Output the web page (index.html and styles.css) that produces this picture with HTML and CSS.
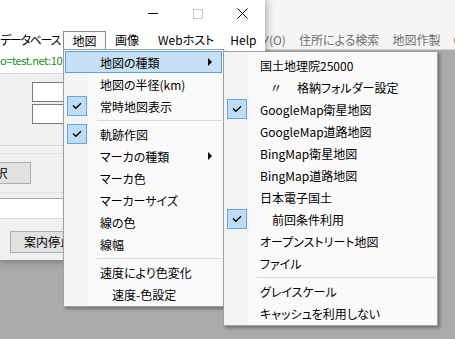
FILE: index.html
```html
<!DOCTYPE html>
<html lang="ja">
<head>
    <meta charset="UTF-8">
    <meta name="viewport" content="width=device-width, initial-scale=1.0">
    <title>地図メニュー</title>
    <link rel="stylesheet" href="styles.css">
</head>
<body>
    <!-- parent window behind -->
    <div class="backwin">
        <div class="back-title"></div>
        <div class="back-menubar">
            <span class="back-first">ソ(O)</span>
            <span>住所による検索</span>
            <span>地図作製</span>
            <span>Option</span>
        </div>
    </div>

    <!-- front window -->
    <div class="win">
        <div class="titlebar">
            <span class="cap"><span class="cap-min"></span></span>
            <span class="cap"><span class="cap-max"></span></span>
            <span class="cap">
                <svg width="11" height="11" viewBox="0 0 11 11"><path d="M0.5 0.5L10.5 10.5M10.5 0.5L0.5 10.5" stroke="#000" stroke-width="1" fill="none"/></svg>
            </span>
        </div>
        <div class="menubar">
            <span class="mb-first">データベース</span>
            <span class="mb-item mb-open">地図</span>
            <span class="mb-item mb-img">画像</span>
            <span class="mb-item mb-web">Webホスト</span>
            <span class="mb-item mb-help">Help</span>
        </div>
        <div class="infobar">o=test.net:10</div>
        <div class="content">
            <div class="field"></div>
            <div class="field field-2"></div>
            <div class="rule rule-a"></div>
            <div class="rule rule-b"></div>
            <div class="btn btn-sel">選択</div>
            <div class="rule rule-c"></div>
            <div class="textbox"></div>
            <div class="btn btn-stop">案内停止</div>
        </div>
    </div>

    <!-- 地図 dropdown -->
    <div class="menu menu-main">
        <div class="mi hot"><span></span><span>地図の種類</span><span class="arrow"></span></div>
        <div class="mi"><span></span><span>地図の半径(km)</span></div>
        <div class="mi"><span class="chk"><svg width="10" height="8" viewBox="0 0 10 8"><polyline points="1,3.5 3.8,6.3 9,1.2" fill="none" stroke="#000" stroke-width="1.3"/></svg></span><span>常時地図表示</span></div>
        <div class="sep"></div>
        <div class="mi"><span class="chk"><svg width="10" height="8" viewBox="0 0 10 8"><polyline points="1,3.5 3.8,6.3 9,1.2" fill="none" stroke="#000" stroke-width="1.3"/></svg></span><span>軌跡作図</span></div>
        <div class="mi"><span></span><span>マーカの種類</span><span class="arrow"></span></div>
        <div class="mi"><span></span><span>マーカ色</span></div>
        <div class="mi"><span></span><span>マーカーサイズ</span></div>
        <div class="mi"><span></span><span>線の色</span></div>
        <div class="mi"><span></span><span>線幅</span></div>
        <div class="sep"></div>
        <div class="mi"><span></span><span>速度により色変化</span></div>
        <div class="mi"><span></span><span class="ind">速度-色設定</span></div>
    </div>

    <!-- 地図の種類 submenu -->
    <div class="menu menu-sub">
        <div class="mi"><span></span><span>国土地理院25000</span></div>
        <div class="mi"><span></span><span><span class="ditto">〃</span>格納フォルダー設定</span></div>
        <div class="mi"><span class="chk"><svg width="10" height="8" viewBox="0 0 10 8"><polyline points="1,3.5 3.8,6.3 9,1.2" fill="none" stroke="#000" stroke-width="1.3"/></svg></span><span>GoogleMap衛星地図</span></div>
        <div class="mi"><span></span><span>GoogleMap道路地図</span></div>
        <div class="mi"><span></span><span>BingMap衛星地図</span></div>
        <div class="mi"><span></span><span>BingMap道路地図</span></div>
        <div class="mi"><span></span><span>日本電子国土</span></div>
        <div class="mi"><span class="chk"><svg width="10" height="8" viewBox="0 0 10 8"><polyline points="1,3.5 3.8,6.3 9,1.2" fill="none" stroke="#000" stroke-width="1.3"/></svg></span><span class="ind">前回条件利用</span></div>
        <div class="mi"><span></span><span>オープンストリート地図</span></div>
        <div class="mi"><span></span><span>ファイル</span></div>
        <div class="sep"></div>
        <div class="mi"><span></span><span>グレイスケール</span></div>
        <div class="mi"><span></span><span>キャッシュを利用しない</span></div>
    </div>
</body>
</html>
```

FILE: styles.css
```css
* {
    box-sizing: border-box;
}
body {
    margin: 0;
    width: 455px;
    height: 339px;
    overflow: hidden;
    position: relative;
    background: #ababab;
    font-family: "Noto Sans CJK JP", "Noto Sans", sans-serif;
    font-size: 12px;
    font-feature-settings: "palt";
    color: #000;
}

/* window behind */
.backwin {
    position: absolute;
    left: 0;
    top: 0;
    width: 455px;
    height: 50px;
    background: #f5f5f5;
    border-bottom: 1px solid #d2d2d2;
}
.back-title {
    height: 31px;
}
.back-menubar {
    display: flex;
    gap: 13px;
    margin-left: 265px;
    overflow: hidden;
    line-height: 18px;
    color: #6f6f6f;
    white-space: nowrap;
}
.back-first {
    margin-left: -6px;
}

/* front window */
.win {
    position: absolute;
    left: 0;
    top: 0;
    width: 265px;
    height: 260px;
    background: #f0f0f0;
    box-shadow: 0 0 9px rgba(0, 0, 0, 0.45);
    overflow: hidden;
}
.titlebar {
    height: 28px;
    background: #fff;
    display: flex;
    justify-content: flex-end;
    padding-bottom: 1px;
}
.cap {
    width: 45px;
    display: flex;
    align-items: center;
    justify-content: center;
}
.cap-min {
    width: 10px;
    height: 1px;
    background: #000;
}
.cap-max {
    width: 10px;
    height: 10px;
    border: 1px solid #c4c4c4;
}
.menubar {
    height: 22px;
    background: #fff;
    display: flex;
    padding-top: 3px;
    white-space: nowrap;
}
.mb-first {
    width: 63px;
    line-height: 18px;
    letter-spacing: -1.3px;
}
.mb-item {
    line-height: 18px;
}
.mb-open {
    width: 43px;
    height: 19px;
    text-align: center;
    border: 1px solid #8c8c8c;
    border-bottom: none;
    background: #fafafa;
}
.mb-img {
    margin-left: 9px;
}
.mb-web {
    margin-left: 19px;
}
.mb-help {
    margin-left: 16px;
}
.infobar {
    height: 24px;
    background: #fff;
    border-bottom: 1px solid #d9d9d9;
    color: #1b8f1b;
    font-size: 11px;
    letter-spacing: -0.4px;
    line-height: 20px;
    white-space: nowrap;
}
.content {
    padding-top: 8px;
}
.field {
    margin-left: 32px;
    width: 40px;
    height: 20px;
    background: #fff;
    border: 1px solid #7a7a7a;
}
.field-2 {
    margin-top: 2px;
}
.rule {
    height: 1px;
}
.rule-a {
    margin-top: 21px;
    background: #d6d6d6;
}
.rule-b {
    margin-top: 7px;
    background: #e4e4e4;
}
.rule-c {
    margin-top: 8px;
    background: #e2e2e2;
}
.btn {
    height: 22px;
    background: #e1e1e1;
    border: 1px solid #adadad;
    line-height: 20px;
    white-space: nowrap;
}
.btn-sel {
    margin-top: 8px;
    margin-left: -40px;
    width: 71px;
    text-align: center;
}
.textbox {
    margin-top: 5px;
    height: 21px;
    background: #fff;
    border-top: 1px solid #a3a3a3;
    border-bottom: 1px solid #d8d8d8;
}
.btn-stop {
    margin-top: 12px;
    margin-left: 10px;
    width: 80px;
    padding-left: 13px;
}

/* popup menus */
.menu {
    position: absolute;
    border: 1px solid #a0a0a0;
    padding: 1px;
    background: linear-gradient(to right, #f3f3f3 0, #f3f3f3 24px, #fafafa 24px);
    box-shadow: 2px 2px 3px rgba(0, 0, 0, 0.35);
    white-space: nowrap;
}
.menu-main {
    left: 63px;
    top: 49px;
    width: 161px;
}
.menu-sub {
    left: 223px;
    top: 51px;
    width: 215px;
    padding-top: 2px;
}
.mi {
    display: grid;
    grid-template-columns: 35px 1fr 16px;
    align-items: center;
    height: 22px;
}
.mi.hot {
    background: #c6dff5;
    box-shadow: inset 0 0 0 1px #5ba3e6;
}
.chk {
    width: 20px;
    height: 20px;
    margin-left: 2px;
    background: #bddcf5;
    border: 1px solid #63a7e6;
    display: flex;
    align-items: center;
    justify-content: center;
}
.arrow {
    width: 0;
    height: 0;
    margin-left: 2px;
    border-left: 4px solid #000;
    border-top: 4px solid transparent;
    border-bottom: 4px solid transparent;
}
.sep {
    height: 1px;
    margin: 3px 0 2px 32px;
    background: #d7d7d7;
}
.ind {
    padding-left: 12px;
}
.ditto {
    margin-left: 10px;
    margin-right: 15px;
}
```
